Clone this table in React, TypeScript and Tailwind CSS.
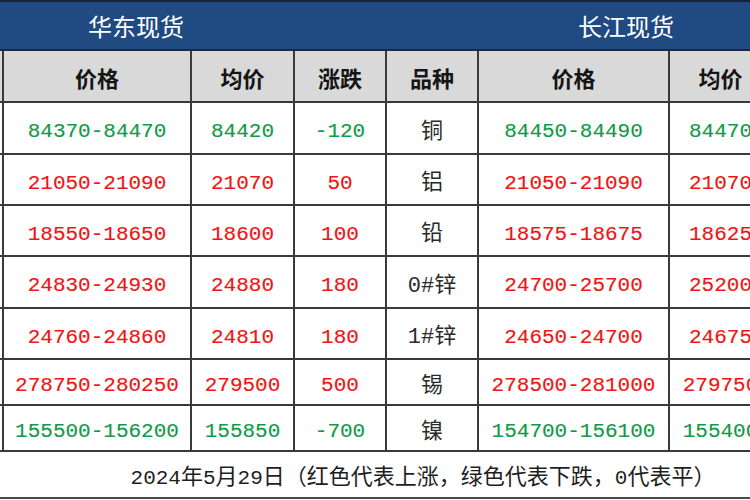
import React from 'react';

const GREEN = 'text-[#119a48]';
const RED = 'text-[#f01414]';

const rows = [
  { h: 'h-[52px]', p1: '84370-84470', a1: '84420', chg: '-120', kind: '铜', p2: '84450-84490', a2: '84470', up: false },
  { h: 'h-[51px]', p1: '21050-21090', a1: '21070', chg: '50', kind: '铝', p2: '21050-21090', a2: '21070', up: true },
  { h: 'h-[51px]', p1: '18550-18650', a1: '18600', chg: '100', kind: '铅', p2: '18575-18675', a2: '18625', up: true },
  { h: 'h-[52px]', p1: '24830-24930', a1: '24880', chg: '180', kind: '0#锌', p2: '24700-25700', a2: '25200', up: true },
  { h: 'h-[51px]', p1: '24760-24860', a1: '24810', chg: '180', kind: '1#锌', p2: '24650-24700', a2: '24675', up: true },
  { h: 'h-[46px]', p1: '278750-280250', a1: '279500', chg: '500', kind: '锡', p2: '278500-281000', a2: '279750', up: true },
  { h: 'h-[46px]', p1: '155500-156200', a1: '155850', chg: '-700', kind: '镍', p2: '154700-156100', a2: '155400', up: false },
];

const grid = 'grid w-[773px] grid-cols-[4px_188px_103px_92px_92px_191px_103px]';
const cell = 'flex items-center justify-center border-r-2 border-b-2 border-[#3a3a3a] whitespace-nowrap';
const num =
  "font-['Liberation_Mono','Noto_Sans_CJK_SC',monospace] text-[21px] [-webkit-text-stroke:0.15px_currentColor]";

const App = () => {
  const headers = ['价格', '均价', '涨跌', '品种', '价格', '均价'];

  return (
    <div className="w-[750px] h-[500px] bg-white overflow-hidden">
      {/* Title band */}
      <div className="h-[2px] bg-[#14233d]" />
      <div className="h-[49px] w-[980px] bg-[#1f4b82] border-b-2 border-[#1a2a44] flex items-center text-white text-[24px] font-['Noto_Sans_CJK_SC',sans-serif]">
        <div className="w-[272px] text-center">华东现货</div>
        <div className="w-[708px] text-center">长江现货</div>
      </div>

      {/* Header row */}
      <div className={`${grid} h-[52px] bg-[#d9d9d9]`}>
        <div className="border-r-2 border-b-2 border-[#3a3a3a]" />
        {headers.map((t, i) => (
          <div key={i} className={`${cell} pt-[2px] text-[22px] font-bold text-[#151515] font-['Noto_Sans_CJK_SC',sans-serif]`}>
            {t}
          </div>
        ))}
      </div>

      {/* Data rows */}
      {rows.map((r) => {
        const color = r.up ? RED : GREEN;
        return (
          <div key={r.kind} className={`${grid} ${r.h}`}>
            <div className="border-r-2 border-b-2 border-[#3a3a3a]" />
            <div className={`${cell} pt-[8px] ${num} ${color}`}>{r.p1}</div>
            <div className={`${cell} pt-[8px] ${num} ${color}`}>{r.a1}</div>
            <div className={`${cell} pt-[8px] ${num} ${color}`}>{r.chg}</div>
            <div className={`${cell} pt-[8px] font-['Liberation_Mono','Noto_Sans_CJK_SC',monospace] text-[21px] text-[#2a2a2a]`}>
              <span className="text-[22px]">{r.kind}</span>
            </div>
            <div className={`${cell} pt-[8px] ${num} ${color}`}>{r.p2}</div>
            <div className={`${cell} pt-[8px] ${num} ${color}`}>{r.a2}</div>
          </div>
        );
      })}

      {/* Footer note */}
      <div className="h-[47px] border-b-2 border-[#4a4a4a] flex items-center justify-center pl-[96px] pt-[7px]">
        <span className="font-['Liberation_Mono','Noto_Sans_CJK_SC',monospace] text-[21px] text-[#1e1e1e]">
          <span>2024</span>
          <span className="text-[22px]">年</span>5<span className="text-[22px]">月</span>29
          <span className="text-[22px]">日（红色代表上涨，绿色代表下跌，</span>0
          <span className="text-[22px]">代表平）</span>
        </span>
      </div>
    </div>
  );
};

export default App;
